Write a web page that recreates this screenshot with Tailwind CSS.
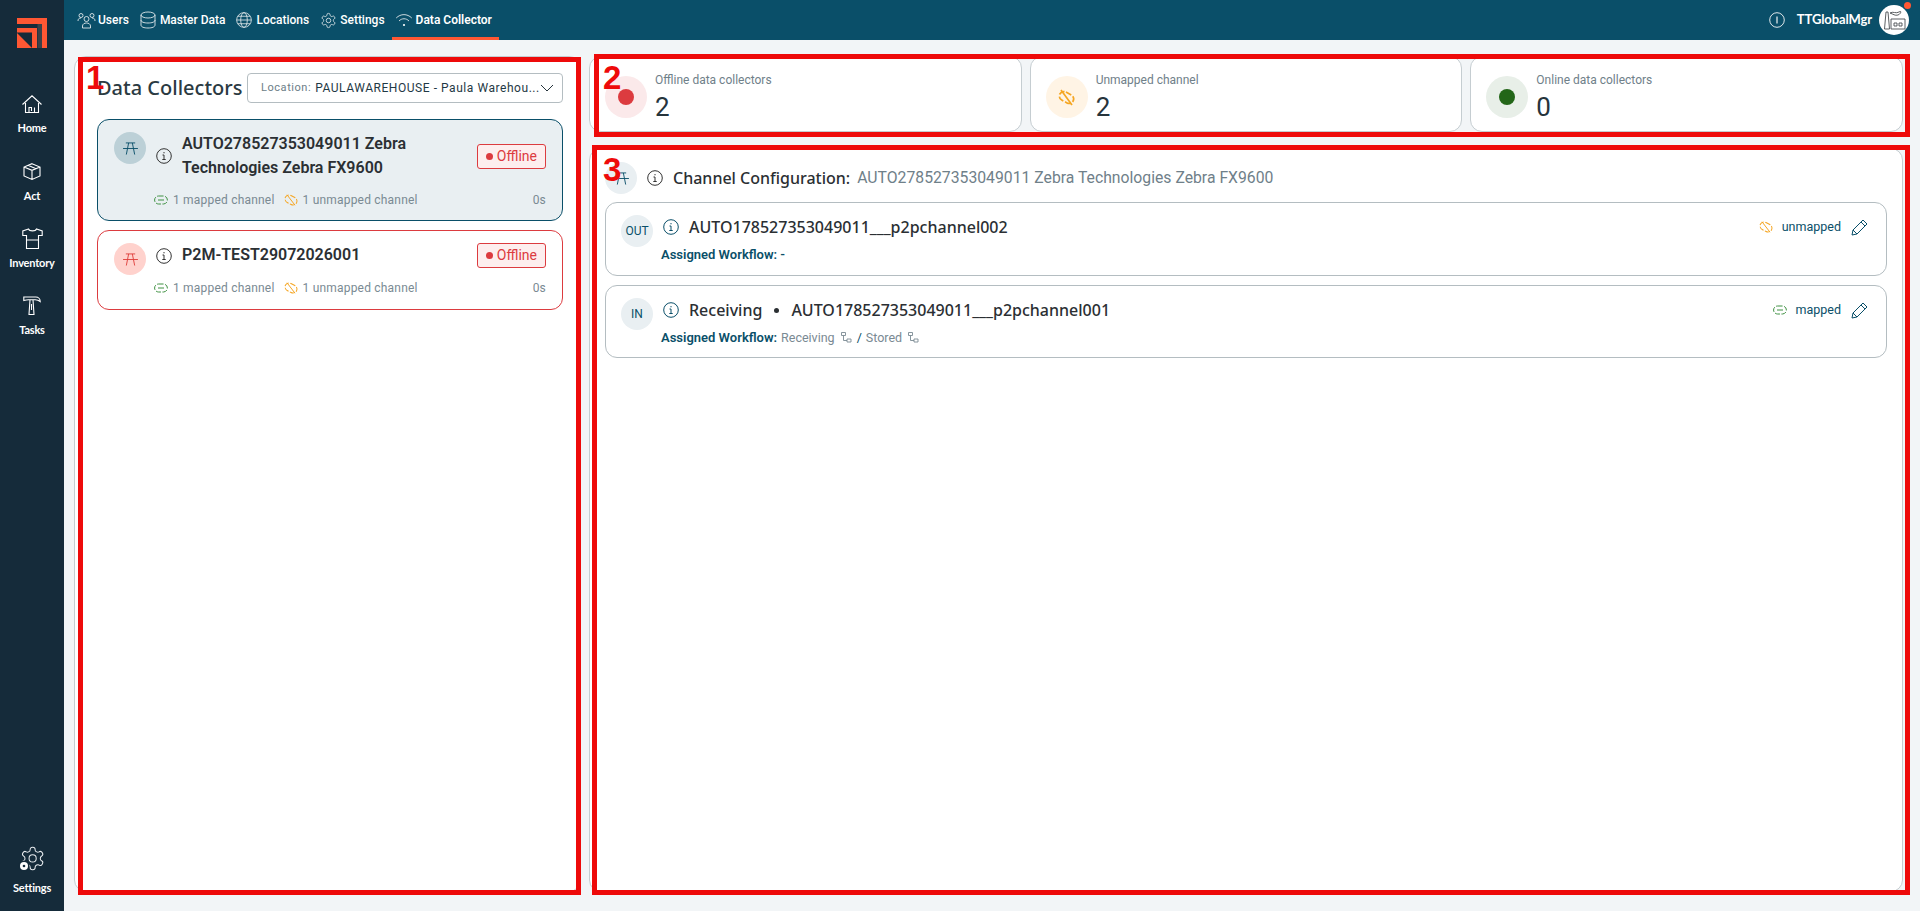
<!DOCTYPE html>
<html>
<head>
<meta charset="utf-8">
<title>Data Collector</title>
<script src="https://cdn.jsdelivr.net/npm/@tailwindcss/browser@4"></script>
</head>
<body class="h-[911px] w-[1920px] overflow-hidden bg-[#f2f5f7] font-['Roboto',sans-serif] text-[#26343c]">
<div class="relative flex h-[911px] w-[1920px]">

<!-- sidebar -->
<aside class="flex w-[64px] shrink-0 flex-col items-center bg-[#152b3a] font-['Lato',sans-serif] text-[11px] font-bold leading-[14px] tracking-[-0.2px] text-white">
  <svg class="mt-[18px] h-[30px] w-[30px]" viewBox="0 0 30 30"><path d="M0 0h30v30h-5V6H0z" fill="#ff5733"/><path d="M20.500 6H25v24h-4.500z" fill="#3a4148"/><path d="M0 10h20v20h-5V14.500H0z" fill="#ff5733"/><path d="M0 15l15 15H0z" fill="#ff5733"/></svg>
  <div class="mt-[47px] flex flex-col items-center gap-[8px]">
    <svg class="h-[18px] w-[20px]" viewBox="0 0 20 18" fill="none" stroke="#fff" stroke-width="1.100"><path d="M.5 9.500 10 .8l9.500 8.700M3.500 8v9.500h13V8M7 17.500v-5h2.500v3.500M12.500 17.500v-5"/></svg>
    <span>Home</span>
  </div>
  <div class="mt-[28px] flex flex-col items-center gap-[9px]">
    <svg class="h-[17px] w-[18px]" viewBox="0 0 18 17" fill="none" stroke="#fff" stroke-width="1.100"><path d="M9 .7 17 4v9l-8 3.400L1 13V4zM1 4l8 3.300L17 4M9 7.300v9M5 2.300 13 5.700"/></svg>
    <span>Act</span>
  </div>
  <div class="mt-[25px] flex flex-col items-center gap-[7px]">
    <svg class="h-[21px] w-[21px]" viewBox="0 0 21 21" fill="none" stroke="#fff" stroke-width="1.100"><path d="M6.500 1 .8 3v4.500h3.700v13h12v-13h3.700V3L14.500 1c-1 2.500-7 2.500-8 0zM4.500 12h12"/></svg>
    <span>Inventory</span>
  </div>
  <div class="mt-[26px] flex flex-col items-center gap-[8px]">
    <svg class="h-[19px] w-[18px]" viewBox="0 0 18 19" fill="none" stroke="#fff" stroke-width="1.100"><path d="M.8 1h12c2.500 0 4.400 2 4.400 4.500-1.500-1.200-3-1.800-5-1.800H5.500C4 3.700 2.500 4 .8 4.500zM7 3.700 6 18.500h5L10 3.700M8.500 8v6"/></svg>
    <span>Tasks</span>
  </div>
  <div class="mt-auto mb-[16px] flex flex-col items-center gap-[9px]">
    <svg class="h-[27px] w-[28px]" viewBox="0 0 28 27" fill="none" stroke="#e8ecef"><g transform="translate(1.200 0) scale(1.120)"><path d="M12.220 2h-.44a2 2 0 0 0-2 2v.18a2 2 0 0 1-1 1.730l-.43.25a2 2 0 0 1-2 0l-.15-.08a2 2 0 0 0-2.730.73l-.22.38a2 2 0 0 0 .73 2.730l.15.1a2 2 0 0 1 1 1.720v.51a2 2 0 0 1-1 1.740l-.15.09a2 2 0 0 0-.73 2.730l.22.38a2 2 0 0 0 2.730.73l.15-.08a2 2 0 0 1 2 0l.43.25a2 2 0 0 1 1 1.730V20a2 2 0 0 0 2 2h.44a2 2 0 0 0 2-2v-.18a2 2 0 0 1 1-1.730l.43-.25a2 2 0 0 1 2 0l.15.08a2 2 0 0 0 2.730-.73l.22-.39a2 2 0 0 0-.73-2.730l-.15-.08a2 2 0 0 1-1-1.740v-.5a2 2 0 0 1 1-1.740l.15-.09a2 2 0 0 0 .73-2.730l-.22-.38a2 2 0 0 0-2.730-.73l-.15.08a2 2 0 0 1-2 0l-.43-.25a2 2 0 0 1-1-1.730V4a2 2 0 0 0-2-2z" stroke-width=".9"/><circle cx="12" cy="12" r="3.200" stroke-width=".9"/></g><circle cx="6" cy="21" r="5.500" fill="#152b3a" stroke="none"/><circle cx="6" cy="21" r="4" fill="#fff" stroke="none"/><circle cx="6" cy="21" r="1.300" fill="#152b3a" stroke="none"/></svg>
    <span>Settings</span>
  </div>
</aside>

<div class="flex min-w-0 flex-1 flex-col">
  <!-- header -->
  <header class="flex h-[40px] shrink-0 items-center bg-[#0a4f69] pl-[13px] pr-[11px] text-white">
    <nav class="flex h-full items-center text-[12px] font-medium text-white">
      <div class="flex items-center gap-[2px]">
        <svg class="h-[17px] w-[19px]" viewBox="0 0 18 17" fill="none" stroke="#dfe7ea" stroke-width=".9"><circle cx="9" cy="7" r="2.500"/><path d="M5 16v-2c0-2 2-3 4-3s4 1 4 3v2z"/><circle cx="3.500" cy="3.500" r="2"/><circle cx="14.500" cy="3.500" r="2"/><path d="M.5 9c0-2 1-3 3-3M17.500 9c0-2-1-3-3-3"/></svg>
        <span>Users</span>
      </div>
      <div class="ml-[11px] flex items-center gap-[4px]">
        <svg class="h-[18px] w-[16px]" viewBox="0 0 16 18" fill="none" stroke="#dfe7ea" stroke-width=".9"><ellipse cx="8" cy="4" rx="7" ry="3"/><path d="M1 4v10c0 2 3 3 7 3s7-1 7-3V4M1 9c0 2 3 3 7 3s7-1 7-3"/></svg>
        <span>Master Data</span>
      </div>
      <div class="ml-[11px] flex items-center gap-[4px]">
        <svg class="h-[16px] w-[16px]" viewBox="0 0 17 17" fill="none" stroke="#dfe7ea" stroke-width=".9"><circle cx="8.500" cy="8.500" r="7.800"/><ellipse cx="8.500" cy="8.500" rx="3.500" ry="7.800"/><path d="M.7 8.500h15.600M2 4.500h13M2 12.500h13"/></svg>
        <span>Locations</span>
      </div>
      <div class="ml-[11px] flex items-center gap-[3px]">
        <svg class="h-[17px] w-[17px]" viewBox="0 0 24 24" fill="none" stroke="#dfe7ea" stroke-width="1.200"><path d="M12.220 2h-.44a2 2 0 0 0-2 2v.18a2 2 0 0 1-1 1.730l-.43.25a2 2 0 0 1-2 0l-.15-.08a2 2 0 0 0-2.730.73l-.22.38a2 2 0 0 0 .73 2.730l.15.1a2 2 0 0 1 1 1.720v.51a2 2 0 0 1-1 1.740l-.15.09a2 2 0 0 0-.73 2.730l.22.38a2 2 0 0 0 2.730.73l.15-.08a2 2 0 0 1 2 0l.43.25a2 2 0 0 1 1 1.730V20a2 2 0 0 0 2 2h.44a2 2 0 0 0 2-2v-.18a2 2 0 0 1 1-1.730l.43-.25a2 2 0 0 1 2 0l.15.08a2 2 0 0 0 2.730-.73l.22-.39a2 2 0 0 0-.73-2.730l-.15-.08a2 2 0 0 1-1-1.740v-.5a2 2 0 0 1 1-1.740l.15-.09a2 2 0 0 0 .73-2.730l-.22-.38a2 2 0 0 0-2.730-.73l-.15.08a2 2 0 0 1-2 0l-.43-.25a2 2 0 0 1-1-1.730V4a2 2 0 0 0-2-2z"/><circle cx="12" cy="12" r="3.200"/></svg>
        <span>Settings</span>
      </div>
      <div class="relative ml-[7px] flex h-full items-center gap-[3px] pl-[3px] pr-[7px]">
        <svg class="h-[14px] w-[18px]" viewBox="0 0 17 14" fill="none" stroke="#dfe7ea" stroke-width=".9"><path d="M.7 5c4.500-4.500 11-4.500 15.600 0M3.500 8c2.800-3 7.200-3 10 0"/><circle cx="8.500" cy="12" r="1.100" fill="#fff" stroke="none"/></svg>
        <span class="font-semibold">Data Collector</span>
        <span class="absolute inset-x-0 bottom-0 h-[3px] bg-[#ff5733]"></span>
      </div>
    </nav>
    <div class="ml-auto flex items-center">
      <svg class="h-[16px] w-[16px]" viewBox="0 0 16 16" fill="none" stroke="#dfe7ea"><circle cx="8" cy="8" r="7.300"/><path d="M8 4.500v7" stroke-width="1.300"/></svg>
      <span class="ml-[12px] font-['Lato',sans-serif] text-[13px] font-bold tracking-[-0.1px]">TTGlobalMgr</span>
      <div class="relative ml-[7px] flex h-[30px] w-[30px] items-center justify-center rounded-full bg-white">
        <svg class="h-[20px] w-[24px]" viewBox="0 0 24 20" fill="none" stroke="#4b4f52" stroke-width=".9"><path d="M4 2 2.500 19h5L6 2zM9 9h14v10H9zM8 3c3-2 6 1 9-1s2 2-1 3-5-1-8-2z"/><path d="M12 13h3v3h-3zM17 13h3v3h-3z"/></svg>
        <span class="absolute right-[-2px] top-[-3px] h-[7px] w-[7px] rounded-full bg-[#ff5733]"></span>
      </div>
    </div>
  </header>

  <!-- content -->
  <main class="flex min-h-0 flex-1 gap-[8px] pb-[19px] pl-[10px] pr-[17px] pt-[16px]">
    <!-- left panel -->
    <section class="flex w-[507px] shrink-0 flex-col rounded-[12px] border border-[#c5cdd1] bg-white pl-[22px] pr-[17px] pt-[13px]">
      <div class="flex h-[36px] items-center">
        <h1 class="font-['Noto_Sans',sans-serif] text-[20px] font-medium text-[#2b3a42]">Data Collectors</h1>
        <div class="ml-auto flex h-[30px] w-[316px] items-center whitespace-nowrap rounded-[4px] border border-[#b4bdc1] pl-[13px] pr-[14px] text-[12px] tracking-[0.55px]">
          <span class="text-[11px] text-[#6c7d87]">Location:</span>
          <span class="ml-[4px] text-[#1f3945]">PAULAWAREHOUSE - Paula Warehou...</span>
          <svg class="ml-auto h-[8px] w-[14px] shrink-0" viewBox="0 0 14 8" fill="none" stroke="#26343c"><path d="M1 1l6 6 6-6"/></svg>
        </div>
      </div>
      <div class="mt-[13px] flex h-[102px] flex-col rounded-[12px] border border-[#0a4f69] bg-[#e9eff2] pl-[16px] pr-[16px] pt-[12px]">
        <div class="flex">
          <span class="flex h-[32px] w-[32px] shrink-0 items-center justify-center rounded-full bg-[#bcd0d7]">
            <svg class="h-[13px] w-[15px]" viewBox="0 0 16 14" fill="none" stroke="#0a4f69"><path d="M3 1h10M0 7h16M6 1 3.500 13.500M10 1l2.500 12.500"/></svg>
          </span>
          <svg class="ml-[10px] mt-[16px] h-[16px] w-[16px] shrink-0" viewBox="0 0 16 16" fill="none" stroke="#333"><circle cx="8" cy="8" r="7.300"/><path d="M6.500 7H8v4.500M6.300 11.500h3.400M8 4v1.300"/></svg>
          <div class="ml-[10px] w-[250px] text-[16px] font-semibold leading-[24px] text-[#2b2f33]">AUTO278527353049011 Zebra Technologies Zebra FX9600</div>
          <span class="ml-auto mt-[12px] flex h-[25px] items-center gap-[4px] self-start rounded-[3px] border border-[#dc3b3f] bg-[#fdeeee] px-[8px] text-[14px] text-[#dc3b3f]"><i class="h-[7px] w-[7px] rounded-full bg-[#dc3b3f]"></i>Offline</span>
        </div>
        <div class="ml-[40px] mt-[11px] flex items-center text-[12px] tracking-[0.2px] text-[#7a8a93]">
          <svg class="h-[10px] w-[14px]" viewBox="0 0 14 10" fill="none" stroke="#3f9142"><rect x=".6" y="1" width="12.800" height="8" rx="4" stroke-dasharray="5 1.500"/><path d="M4 5h6"/></svg>
          <span class="ml-[5px]">1 mapped channel</span>
          <svg class="ml-[9px] h-[12px] w-[14px]" viewBox="0 0 14 12" fill="none" stroke="#f5a623"><rect x=".8" y="2" width="12.400" height="8" rx="4" stroke-dasharray="5 1.500" transform="rotate(28 7 6)"/><path d="M3 .8l8 10.400"/></svg>
          <span class="ml-[5px]">1 unmapped channel</span>
          <span class="ml-auto">0s</span>
        </div>
      </div>
      <div class="mt-[9px] flex h-[80px] flex-col rounded-[12px] border border-[#dc3b3f] pl-[16px] pr-[16px] pt-[12px]">
        <div class="flex">
          <span class="flex h-[32px] w-[32px] shrink-0 items-center justify-center rounded-full bg-[#ffd2cd]">
            <svg class="h-[13px] w-[15px]" viewBox="0 0 16 14" fill="none" stroke="#e0403c"><path d="M3 1h10M0 7h16M6 1 3.500 13.500M10 1l2.500 12.500"/></svg>
          </span>
          <svg class="ml-[10px] mt-[5px] h-[16px] w-[16px] shrink-0" viewBox="0 0 16 16" fill="none" stroke="#333"><circle cx="8" cy="8" r="7.300"/><path d="M6.500 7H8v4.500M6.300 11.500h3.400M8 4v1.300"/></svg>
          <div class="ml-[10px] text-[16px] font-semibold leading-[24px] text-[#2b2f33]">P2M-TEST29072026001</div>
          <span class="ml-auto flex h-[25px] items-center gap-[4px] self-start rounded-[3px] border border-[#dc3b3f] bg-[#fdeeee] px-[8px] text-[14px] text-[#dc3b3f]"><i class="h-[7px] w-[7px] rounded-full bg-[#dc3b3f]"></i>Offline</span>
        </div>
        <div class="ml-[40px] mt-[4px] flex items-center text-[12px] tracking-[0.2px] text-[#7a8a93]">
          <svg class="h-[10px] w-[14px]" viewBox="0 0 14 10" fill="none" stroke="#3f9142"><rect x=".6" y="1" width="12.800" height="8" rx="4" stroke-dasharray="5 1.500"/><path d="M4 5h6"/></svg>
          <span class="ml-[5px]">1 mapped channel</span>
          <svg class="ml-[9px] h-[12px] w-[14px]" viewBox="0 0 14 12" fill="none" stroke="#f5a623"><rect x=".8" y="2" width="12.400" height="8" rx="4" stroke-dasharray="5 1.500" transform="rotate(28 7 6)"/><path d="M3 .8l8 10.400"/></svg>
          <span class="ml-[5px]">1 unmapped channel</span>
          <span class="ml-auto">0s</span>
        </div>
      </div>
    </section>

    <!-- right -->
    <section class="flex min-w-0 flex-1 flex-col gap-[16px]">
      <div class="grid h-[76px] shrink-0 grid-cols-3 gap-[8px]">
        <div class="flex items-center rounded-[12px] border border-[#c5cdd1] bg-white pl-[15px] pt-[6px]">
          <span class="flex h-[42px] w-[42px] items-center justify-center rounded-full bg-[#fbe9ea]"><i class="h-[16px] w-[16px] rounded-full bg-[#dc3b3f]"></i></span>
          <div class="ml-[8px]"><div class="text-[12px] leading-[14px] text-[#6f8089]">Offline data collectors</div><div class="mt-[5px] text-[26px] leading-[30px] text-[#26343c]">2</div></div>
        </div>
        <div class="flex items-center rounded-[12px] border border-[#c5cdd1] bg-white pl-[15px] pt-[6px]">
          <span class="flex h-[42px] w-[42px] items-center justify-center rounded-full bg-[#fff4e5]"><svg class="h-[17px] w-[19px]" viewBox="0 0 19 17" fill="none" stroke="#f5a623" stroke-width="1.700"><rect x="2" y="4" width="15" height="9" rx="4.500" stroke-dasharray="6 2" transform="rotate(28 9.500 8.500)"/><path d="M4 1l11 15"/></svg></span>
          <div class="ml-[8px]"><div class="text-[12px] leading-[14px] text-[#6f8089]">Unmapped channel</div><div class="mt-[5px] text-[26px] leading-[30px] text-[#26343c]">2</div></div>
        </div>
        <div class="flex items-center rounded-[12px] border border-[#c5cdd1] bg-white pl-[15px] pt-[6px]">
          <span class="flex h-[42px] w-[42px] items-center justify-center rounded-full bg-[#e8efe8]"><i class="h-[16px] w-[16px] rounded-full bg-[#236618]"></i></span>
          <div class="ml-[8px]"><div class="text-[12px] leading-[14px] text-[#6f8089]">Online data collectors</div><div class="mt-[5px] text-[26px] leading-[30px] text-[#26343c]">0</div></div>
        </div>
      </div>

      <div class="min-h-0 flex-1 rounded-[12px] border border-[#c5cdd1] bg-white px-[15px] pt-[13px]">
        <div class="flex h-[32px] items-center">
          <span class="flex h-[32px] w-[32px] items-center justify-center rounded-full bg-[#e9eff2]">
            <svg class="h-[13px] w-[15px]" viewBox="0 0 16 14" fill="none" stroke="#0a4f69"><path d="M3 1h10M0 7h16M6 1 3.500 13.500M10 1l2.500 12.500"/></svg>
          </span>
          <svg class="ml-[10px] h-[16px] w-[16px]" viewBox="0 0 16 16" fill="none" stroke="#333"><circle cx="8" cy="8" r="7.300"/><path d="M6.500 7H8v4.500M6.300 11.500h3.400M8 4v1.300"/></svg>
          <span class="ml-[10px] font-['Noto_Sans',sans-serif] text-[16px] font-medium text-[#2b2f33]">Channel Configuration:</span>
          <span class="ml-[7px] text-[15.750px] text-[#6f8089]">AUTO278527353049011 Zebra Technologies Zebra FX9600</span>
        </div>
        <div class="mt-[8px] flex h-[74px] rounded-[12px] border border-[#b4bdc1] pl-[15px] pr-[18px] pt-[12px]">
          <span class="flex h-[32px] w-[32px] shrink-0 items-center justify-center rounded-full bg-[#e9eff2] text-[12px] text-[#0a4f69]">OUT</span>
          <div class="ml-[8px]">
            <div class="flex items-center"><svg class="ml-[2px] h-[16px] w-[16px]" viewBox="0 0 16 16" fill="none" stroke="#0a4f69"><circle cx="8" cy="8" r="7.300"/><path d="M6.500 7H8v4.500M6.300 11.500h3.400M8 4v1.300"/></svg>
            <span class="ml-[10px] font-['Noto_Sans',sans-serif] text-[16px] font-medium leading-[24px] text-[#2b2f33]">AUTO178527353049011___p2pchannel002</span></div>
            <div class="mt-[8px] text-[13px] font-semibold leading-[15px] text-[#0a4f69]">Assigned Workflow: -</div>
          </div>
          <div class="ml-auto flex h-[24px] items-center">
            <svg class="h-[12px] w-[14px]" viewBox="0 0 14 12" fill="none" stroke="#f5a623"><rect x=".8" y="2" width="12.400" height="8" rx="4" stroke-dasharray="5 1.500" transform="rotate(28 7 6)"/><path d="M3 .8l8 10.400"/></svg>
            <span class="ml-[9px] text-[12.500px] text-[#0a4f69]">unmapped</span>
            <svg class="ml-[10px] h-[17px] w-[17px]" viewBox="0 0 17 17" fill="none" stroke="#0a4f69"><path d="M1 16l1-5L12 1l4 4L6 15zM10 3l4 4M2 11l4 4"/></svg>
          </div>
        </div>
        <div class="mt-[9px] flex h-[73px] rounded-[12px] border border-[#b4bdc1] pl-[15px] pr-[18px] pt-[12px]">
          <span class="flex h-[32px] w-[32px] shrink-0 items-center justify-center rounded-full bg-[#e9eff2] text-[12px] text-[#0a4f69]">IN</span>
          <div class="ml-[8px]">
            <div class="flex items-center"><svg class="ml-[2px] h-[16px] w-[16px]" viewBox="0 0 16 16" fill="none" stroke="#0a4f69"><circle cx="8" cy="8" r="7.300"/><path d="M6.500 7H8v4.500M6.300 11.500h3.400M8 4v1.300"/></svg>
            <span class="ml-[10px] font-['Noto_Sans',sans-serif] text-[16px] font-medium leading-[24px] text-[#2b2f33]">Receiving</span>
            <i class="ml-[12px] h-[5px] w-[5px] rounded-full bg-[#2b2f33]"></i>
            <span class="ml-[12px] font-['Noto_Sans',sans-serif] text-[16px] font-medium leading-[24px] text-[#2b2f33]">AUTO178527353049011___p2pchannel001</span></div>
            <div class="mt-[8px] flex items-center text-[12.500px] leading-[15px] text-[#7a8a93]">
              <span class="text-[13px] font-semibold text-[#0a4f69]">Assigned Workflow:</span>
              <span class="ml-[4px]">Receiving</span>
              <svg class="ml-[6px] h-[11px] w-[11px]" viewBox="0 0 11 11" fill="none" stroke="#7a8a93" stroke-width=".9"><path d="M.5.500h4v3h-4zM6 7h4v3H6zM2.500 3.500v5H6"/></svg>
              <span class="ml-[5px] text-[#0a4f69]">/</span>
              <span class="ml-[4px]">Stored</span>
              <svg class="ml-[6px] h-[11px] w-[11px]" viewBox="0 0 11 11" fill="none" stroke="#7a8a93" stroke-width=".9"><path d="M.5.500h4v3h-4zM6 7h4v3H6zM2.500 3.500v5H6"/></svg>
            </div>
          </div>
          <div class="ml-auto flex h-[24px] items-center">
            <svg class="h-[10px] w-[14px]" viewBox="0 0 14 10" fill="none" stroke="#3f9142"><rect x=".6" y="1" width="12.800" height="8" rx="4" stroke-dasharray="5 1.500"/><path d="M4 5h6"/></svg>
            <span class="ml-[9px] text-[12.500px] text-[#0a4f69]">mapped</span>
            <svg class="ml-[10px] h-[17px] w-[17px]" viewBox="0 0 17 17" fill="none" stroke="#0a4f69"><path d="M1 16l1-5L12 1l4 4L6 15zM10 3l4 4M2 11l4 4"/></svg>
          </div>
        </div>
      </div>
    </section>
  </main>
</div>

<!-- red annotations over the screenshot -->
<div class="pointer-events-none absolute left-[78px] top-[57px] h-[838px] w-[503px] border-[5px] border-[#ee0a0a]"></div>
<div class="pointer-events-none absolute left-[594px] top-[54px] h-[83px] w-[1316px] border-[5px] border-[#ee0a0a]"></div>
<div class="pointer-events-none absolute left-[592px] top-[145px] h-[750px] w-[1318px] border-[5px] border-[#ee0a0a]"></div>
<span class="pointer-events-none absolute left-[86px] top-[60px] font-['Liberation_Sans',sans-serif] text-[33px] font-bold leading-[36px] text-[#ee0a0a]">1</span>
<span class="pointer-events-none absolute left-[603px] top-[60px] font-['Liberation_Sans',sans-serif] text-[33px] font-bold leading-[36px] text-[#ee0a0a]">2</span>
<span class="pointer-events-none absolute left-[603px] top-[152px] font-['Liberation_Sans',sans-serif] text-[33px] font-bold leading-[36px] text-[#ee0a0a]">3</span>
</div>
</body>
</html>
